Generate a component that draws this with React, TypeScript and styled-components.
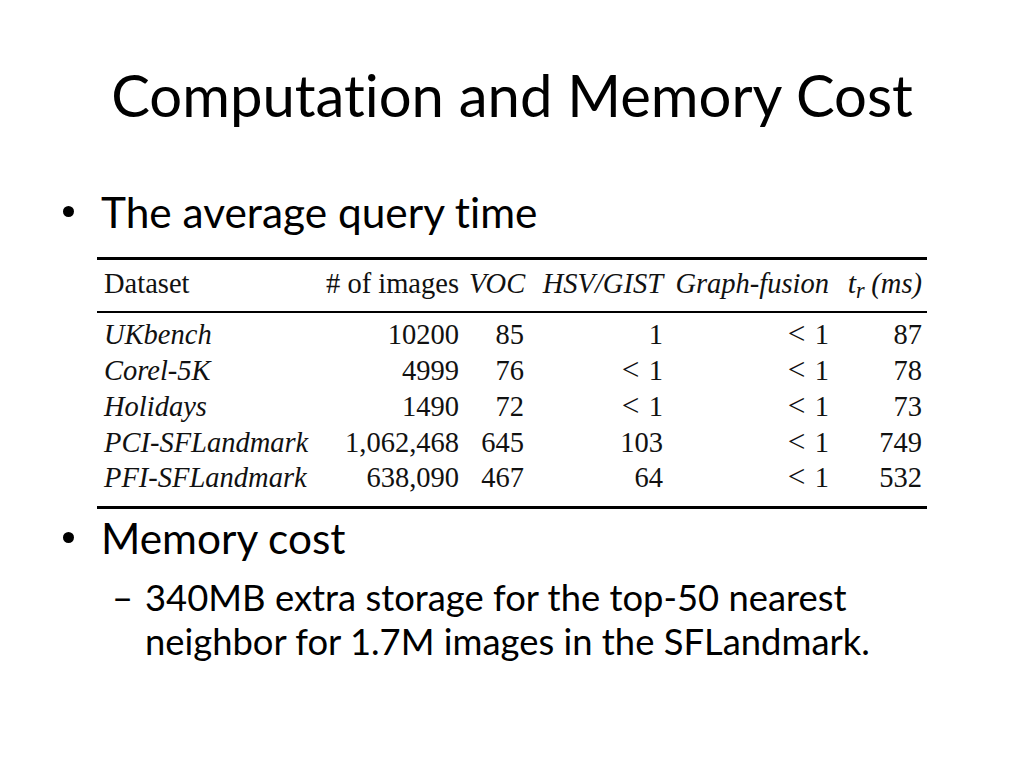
import React from "react";
import styled, { createGlobalStyle } from "styled-components";

const Global = createGlobalStyle`
  html, body { margin: 0; padding: 0; background: #fff; }
  body {
    font-family: Lato, "Open Sans", sans-serif;
    color: #000;
    font-variant-ligatures: none;
    font-feature-settings: "liga" 0, "clig" 0;
  }
`;

const Slide = styled.div`
  width: 1024px;
  height: 768px;
  display: flex;
  flex-direction: column;
  overflow: hidden;
  background: #fff;
`;

const Title = styled.h1`
  margin: 59.5px 0 0;
  font-family: Lato, "Open Sans", sans-serif;
  font-weight: 400;
  font-size: 58px;
  line-height: 70px;
  text-align: center;
  color: #000;
`;

const BulletRow = styled.div<{ $gap: number }>`
  display: flex;
  align-items: flex-start;
  margin-top: ${(p) => p.$gap}px;
  padding-left: 63px;
  font-size: 42.4px;
  line-height: 49px;
`;

const Dot = styled.span`
  flex: none;
  width: 11px;
  height: 11px;
  border-radius: 50%;
  background: #000;
  margin-top: 19px;
  margin-right: 27px;
`;

const SubRow = styled.div`
  display: flex;
  align-items: flex-start;
  margin-top: 13px;
  padding-left: 112px;
  font-size: 36.4px;
  line-height: 44px;
`;

const Dash = styled.span`
  flex: none;
  width: 33px;
`;

const SubText = styled.span`
  width: 770px;
`;

const TableWrap = styled.div`
  margin: 21px 0 0 97px;
  width: 830px;
`;

const Table = styled.table`
  width: 830px;
  border-collapse: collapse;
  table-layout: fixed;
  font-family: "Liberation Serif", "Times New Roman", serif;
  font-size: 28.5px;
  line-height: 35.75px;
  color: #111;
  border-top: 3px solid #000;
  border-bottom: 3px solid #000;
`;

const Th = styled.th<{ $align?: "left" | "right"; $italic?: boolean }>`
  font-weight: 400;
  font-style: ${(p) => (p.$italic ? "italic" : "normal")};
  text-align: ${(p) => p.$align ?? "right"};
  padding: 6.5px 5px 9px;
  white-space: nowrap;
  border-bottom: 2px solid #000;
`;

const Td = styled.td<{ $align?: "left" | "right"; $italic?: boolean }>`
  font-style: ${(p) => (p.$italic ? "italic" : "normal")};
  text-align: ${(p) => p.$align ?? "right"};
  padding: 0 5px;
  white-space: nowrap;
`;

const Body = styled.tbody`
  tr:first-child td { padding-top: 4.5px; }
  tr:last-child td { padding-bottom: 9.5px; }
`;

const MathT = styled.span`
  font-style: italic;
  font-size: 1.05em;
  line-height: 0;
`;

const Sub = styled.sub`
  font-size: 0.78em;
  font-style: italic;
  vertical-align: -0.22em;
  line-height: 0;
  margin-right: 0.3em;
`;

const Less = styled.span`
  font-size: 1.1em;
  line-height: 0;
  margin-right: 0.3em;
`;

const rows = [
  ["UKbench", "10200", "85", "1", "<", "87"],
  ["Corel-5K", "4999", "76", "<", "<", "78"],
  ["Holidays", "1490", "72", "<", "<", "73"],
  ["PCI-SFLandmark", "1,062,468", "645", "103", "<", "749"],
  ["PFI-SFLandmark", "638,090", "467", "64", "<", "532"],
];

function Cell({ value }: { value: string }) {
  if (value === "<") {
    return (
      <Td>
        <Less>&lt;</Less>1
      </Td>
    );
  }
  return <Td>{value}</Td>;
}

export default function App() {
  return (
    <Slide>
      <Global />
      <Title>Computation and Memory Cost</Title>
      <BulletRow $gap={57}>
        <Dot />
        <span>The average query time</span>
      </BulletRow>
      <TableWrap>
        <Table>
          <colgroup>
            <col style={{ width: 219 }} />
            <col style={{ width: 148 }} />
            <col style={{ width: 65 }} />
            <col style={{ width: 139 }} />
            <col style={{ width: 166 }} />
            <col style={{ width: 93 }} />
          </colgroup>
          <thead>
            <tr>
              <Th $align="left" style={{ paddingLeft: 7 }}>Dataset</Th>
              <Th># of images</Th>
              <Th $italic>VOC</Th>
              <Th $italic>HSV/GIST</Th>
              <Th $italic>Graph-fusion</Th>
              <Th $italic>
                <MathT>t</MathT>
                <Sub>r</Sub>(ms)
              </Th>
            </tr>
          </thead>
          <Body>
            {rows.map((r) => (
              <tr key={r[0]}>
                <Td $align="left" $italic style={{ paddingLeft: 7 }}>
                  {r[0]}
                </Td>
                {r.slice(1).map((c, i) => (
                  <Cell key={i} value={c} />
                ))}
              </tr>
            ))}
          </Body>
        </Table>
      </TableWrap>
      <BulletRow $gap={4}>
        <Dot />
        <span>Memory cost</span>
      </BulletRow>
      <SubRow>
        <Dash>–</Dash>
        <SubText>
          340MB extra storage for the top-50 nearest neighbor for 1.7M images in the SFLandmark.
        </SubText>
      </SubRow>
    </Slide>
  );
}
